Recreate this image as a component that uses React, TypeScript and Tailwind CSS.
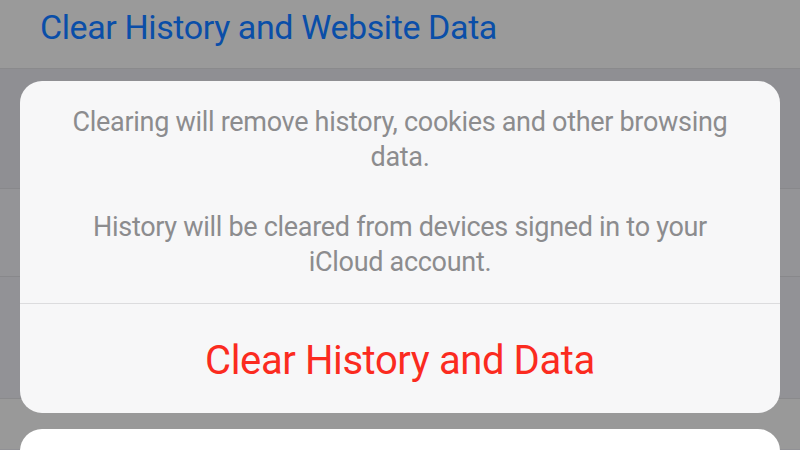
export default function App() {
  const font = { fontFamily: "Roboto, 'Noto Sans', sans-serif" };

  return (
    <div className="relative w-[800px] h-[450px] overflow-hidden bg-[#919195]" style={font}>
      {/* settings list behind the dimmed sheet */}
      <div className="flex flex-col">
        <div className="h-[69px] bg-[#9a9a9a] border-b border-[#8a8a8c] px-10 pt-[10px]">
          <span className="block text-[34px] leading-[34px] tracking-[-0.4px] text-[#0a4ea8]">Clear History and Website Data</span>
        </div>
        <div className="h-[120px] bg-[#8f8f93] border-b border-[#88888b]"></div>
        <div className="h-[88px] bg-[#949497] border-b border-[#88888b]"></div>
        <div className="h-[122px] bg-[#929296] border-b border-[#8a8a8c]"></div>
        <div className="h-[50px] bg-[#999999]"></div>
      </div>

      {/* action sheet */}
      <div className="absolute left-5 right-5 top-[81px] flex flex-col gap-4">
        <div className="rounded-[22px] bg-[#f7f7f8] overflow-hidden">
          <div className="h-[223px] border-b border-[#dcdcde] flex flex-col items-center justify-center gap-[35px] px-12 text-center text-[27px] leading-[35px] text-[#8c8c8e] tracking-[-0.3px]">
            <p>Clearing will remove history, cookies and other browsing data.</p>
            <p className="px-6">History will be cleared from devices signed in to your iCloud account.</p>
          </div>
          <div className="h-[109px] flex items-center justify-center pt-[4px]">
            <span className="text-[40px] text-[#fb2b1f] tracking-[-0.4px]">Clear History and Data</span>
          </div>
        </div>
        <div className="h-[100px] rounded-[22px] bg-white"></div>
      </div>
    </div>
  );
}
